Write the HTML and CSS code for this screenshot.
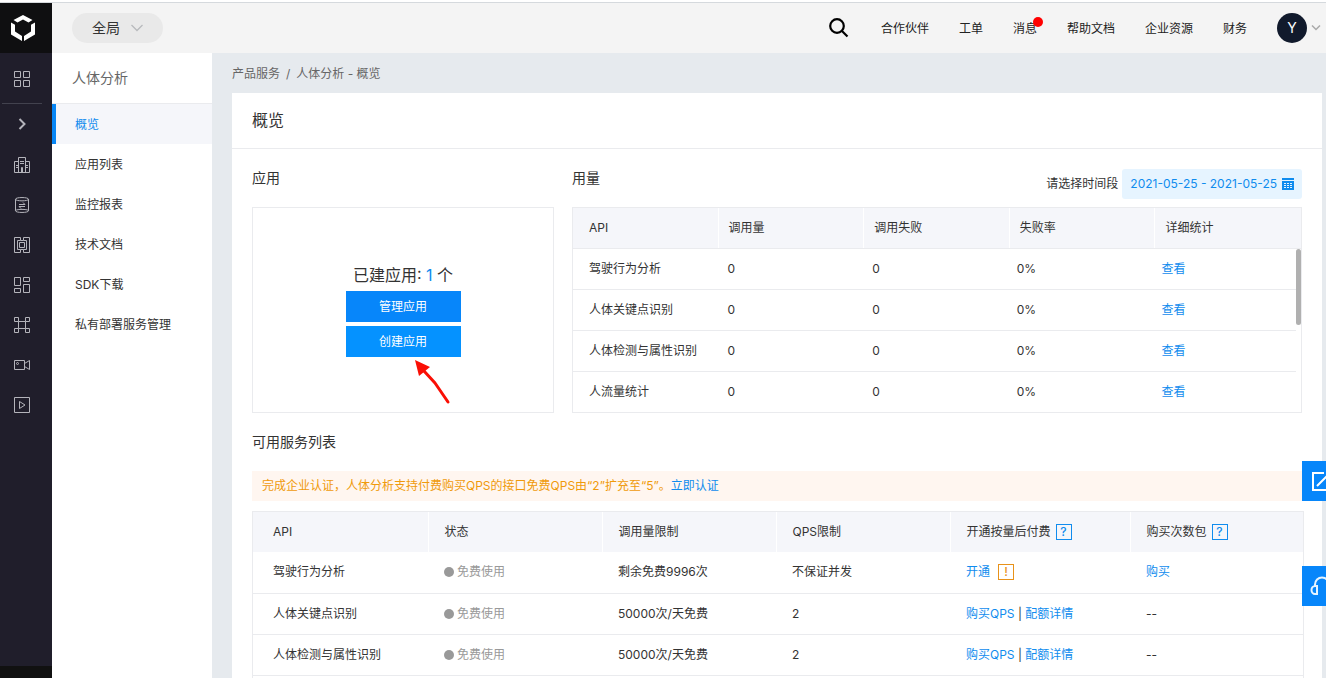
FILE: index.html
```html
<!DOCTYPE html>
<html lang="zh-CN">
<head>
<meta charset="utf-8">
<meta name="viewport" content="width=device-width, initial-scale=1">
<title>人体分析 - 概览</title>
<link rel="stylesheet" href="styles.css">
</head>
<body>
<div class="app">
  <nav class="rail" aria-label="产品导航">
    <a class="rail-logo" href="#" aria-label="首页">
      <svg width="24" height="28" viewBox="0 0 24 28" fill="#fff"><path d="M12 1 21.500 6 17.500 8.500 12 5.400 6.500 8.500 2.500 6z"/><path d="M0 8.500 4 10.800V17.500L11 22V27L0 20.600z"/><path d="M24 8.500 20 10.800V17.500L13 22V27L24 20.600z"/></svg>
    </a>
    <a class="rail-item rail-home" href="#" aria-label="总览">
      <svg class="icon" viewBox="0 0 16 16"><path d="M.5.500h6v6h-6zM9.500.500h6v6h-6zM.5 9.500h6v6h-6zM9.500 9.500h6v6h-6z"/></svg>
    </a>
    <a class="rail-item rail-expand" href="#" aria-label="展开">
      <svg class="icon icon-bold" viewBox="0 0 16 16"><path d="M5.500 3l5 5-5 5"/></svg>
    </a>
    <a class="rail-item" href="#" aria-label="企业">
      <svg class="icon" viewBox="0 0 16 16"><path d="M4.500 15.500V.500h7v15M4.500 4.500h-4v11h15v-11h-4M6 4.500h4M6 6.500h4M2 8.500h2.500M2 10.500h2.500M11.500 8.500H14M11.500 10.500H14M7.500 15.500v-5h1v5"/></svg>
    </a>
    <a class="rail-item" href="#" aria-label="数据">
      <svg class="icon" viewBox="0 0 16 16"><path d="M1.500 2.200C1.500 0 14.500 0 14.500 2.200S1.500 4.400 1.500 2.200v11.600c0 2.200 13 2.200 13 0V2.200M1.500 13.500c2-1.500 11-1.500 13 0M5 7.500h6L9 5.500M11 9.500H5l2 2"/></svg>
    </a>
    <a class="rail-item" href="#" aria-label="芯片">
      <svg class="icon" viewBox="0 0 16 16"><path d="M6.500 3.500v-3h-6v15h6v-3h-3v-9h3M9.500 3.500v-3h6v15h-6v-3h3v-9h-3M5.500 5.500h5v5h-5zM6.500 3.500h3M6.500 12.500h3"/></svg>
    </a>
    <a class="rail-item" href="#" aria-label="模块">
      <svg class="icon" viewBox="0 0 16 16"><path d="M.5.500h6v8h-6zM9.500.500h6v4h-6zM.5 11.500h6v4h-6zM9.500 7.500h6v8h-6z"/></svg>
    </a>
    <a class="rail-item" href="#" aria-label="图谱">
      <svg class="icon" viewBox="0 0 16 16"><path d="M.5.500h4v4h-4zM11.500.500h4v4h-4zM.5 11.500h4v4h-4zM11.500 11.500h4v4h-4zM4.500 4.500v7M11.500 4.500v7M4.500 4.500h7M4.500 11.500h7"/></svg>
    </a>
    <a class="rail-item" href="#" aria-label="视频">
      <svg class="icon" viewBox="0 0 16 16"><path d="M.5 3.500h10v9H.5zM10.500 6.500l5-3v9l-5-3"/><circle cx="3.500" cy="6.500" r="1"/></svg>
    </a>
    <a class="rail-item" href="#" aria-label="播放">
      <svg class="icon" viewBox="0 0 16 16"><path d="M.5.500h15v15H.5zM5.500 4.500 11 8l-5.500 3.500z"/></svg>
    </a>
  </nav>

  <div class="shell">
    <header class="topbar">
      <button class="scope" type="button">全局
        <svg width="12" height="8" viewBox="0 0 12 8" fill="none" stroke="#b8babd" stroke-width="1.300"><path d="M.5 1 6 6.500 11.500 1"/></svg>
      </button>
      <div class="top-links">
        <button class="search" type="button" aria-label="搜索">
          <svg width="20" height="20" viewBox="0 0 20 20" fill="none" stroke="#000" stroke-width="2.200"><circle cx="8" cy="8" r="6.800"/><path d="M13 13 18.500 18.500"/></svg>
        </button>
        <a href="#">合作伙伴</a>
        <a href="#">工单</a>
        <a class="message" href="#">消息<span class="dot"></span></a>
        <a href="#">帮助文档</a>
        <a href="#">企业资源</a>
        <a href="#">财务</a>
        <button class="account" type="button" aria-label="账户">
          <span class="avatar">Y</span>
          <svg width="10" height="6" viewBox="0 0 10 6" fill="none" stroke="#aaa" stroke-width="1.500"><path d="M1 .5 5 4.500 9 .5"/></svg>
        </button>
      </div>
    </header>

    <div class="body">
      <aside class="sidebar">
        <h2 class="sidebar-title">人体分析</h2>
        <a class="side-link active" href="#">概览</a>
        <a class="side-link" href="#">应用列表</a>
        <a class="side-link" href="#">监控报表</a>
        <a class="side-link" href="#">技术文档</a>
        <a class="side-link" href="#">SDK下载</a>
        <a class="side-link" href="#">私有部署服务管理</a>
      </aside>

      <main class="main">
        <nav class="crumbs" aria-label="面包屑"><a href="#">产品服务</a><span>/</span><span>人体分析 - 概览</span></nav>
        <div class="card">
          <h1 class="card-title">概览</h1>
          <div class="overview">
            <section class="apps">
              <div class="section-head"><h3>应用</h3></div>
              <div class="app-box">
                <p class="app-count">已建应用: <a href="#">1</a> 个</p>
                <button class="primary" type="button">管理应用</button>
                <button class="primary light" type="button">创建应用</button>
                <svg class="arrow" width="36" height="46" viewBox="0 0 36 46"><path d="M9 11 20 23 33 42" fill="none" stroke="#fa0f05" stroke-width="3" stroke-linecap="round" stroke-linejoin="round"/><path d="M0 0 15 7 4 16z" fill="#fa0f05"/></svg>
              </div>
            </section>
            <section class="usage">
              <div class="section-head">
                <h3>用量</h3>
                <div class="range">
                  <label for="range">请选择时间段</label>
                  <button id="range" class="range-button" type="button">2021-05-25 - 2021-05-25
                    <svg width="12" height="12" viewBox="0 0 12 12"><path fill="#108cee" d="M0 0h12v12H0z"/><path stroke="#e6f4ff" d="M0 2.500h12M2 5.500h8M2 7.500h8M2 9.500h8"/><path stroke="#108cee" d="M4.500 4v6M7.500 4v6"/></svg>
                  </button>
                </div>
              </div>
              <div class="usage-wrap">
                <table class="usage-table">
                  <thead><tr><th>API</th><th>调用量</th><th>调用失败</th><th>失败率</th><th>详细统计</th></tr></thead>
                  <tbody>
                    <tr><td>驾驶行为分析</td><td>0</td><td>0</td><td>0%</td><td><a href="#">查看</a></td></tr>
                    <tr><td>人体关键点识别</td><td>0</td><td>0</td><td>0%</td><td><a href="#">查看</a></td></tr>
                    <tr><td>人体检测与属性识别</td><td>0</td><td>0</td><td>0%</td><td><a href="#">查看</a></td></tr>
                    <tr><td>人流量统计</td><td>0</td><td>0</td><td>0%</td><td><a href="#">查看</a></td></tr>
                  </tbody>
                </table>
                <span class="thumb"></span>
              </div>
            </section>
          </div>

          <section class="services">
            <div class="section-head"><h3>可用服务列表</h3></div>
            <p class="notice">完成企业认证，人体分析支持付费购买QPS的接口免费QPS由“2”扩充至“5”。<a href="#">立即认证</a></p>
            <div class="service-wrap">
              <table class="service-table">
                <colgroup><col class="c-api"><col class="c-mid"><col class="c-mid"><col class="c-mid"><col class="c-pay"><col></colgroup>
                <thead><tr><th>API</th><th>状态</th><th>调用量限制</th><th>QPS限制</th><th>开通按量后付费<span class="badge">?</span></th><th>购买次数包<span class="badge">?</span></th></tr></thead>
                <tbody>
                  <tr><td>驾驶行为分析</td><td><span class="status">免费使用</span></td><td>剩余免费9996次</td><td>不保证并发</td><td><a href="#">开通</a><span class="badge warn">!</span></td><td><a href="#">购买</a></td></tr>
                  <tr><td>人体关键点识别</td><td><span class="status">免费使用</span></td><td>50000次/天免费</td><td>2</td><td><a href="#">购买QPS</a> | <a href="#">配额详情</a></td><td>--</td></tr>
                  <tr><td>人体检测与属性识别</td><td><span class="status">免费使用</span></td><td>50000次/天免费</td><td>2</td><td><a href="#">购买QPS</a> | <a href="#">配额详情</a></td><td>--</td></tr>
                </tbody>
              </table>
            </div>
          </section>
        </div>
      </main>
    </div>
  </div>
</div>

<div class="floats">
  <button class="float" type="button" aria-label="反馈">
    <svg width="20" height="20" viewBox="0 0 20 20" fill="none" stroke="#fff" stroke-width="2"><path d="M12 2H1v17h17V8M5 15 18 2"/></svg>
  </button>
  <button class="float" type="button" aria-label="客服">
    <svg width="24" height="22" viewBox="0 0 24 22" fill="none" stroke="#e6f4ff" stroke-width="2"><path d="M5 12V9.500a7 7 0 0 1 14 0V12M7 11v8H5a3.500 4 0 0 1 0-8zM17 11v8h2a3.500 4 0 0 0 0-8z"/></svg>
  </button>
</div>
</body>
</html>
```
FILE: styles.css
```css
* { box-sizing: border-box; }

body {
  margin: 0;
  background: #fff;
  color: #333;
  font: 12px/20px Inter, "Noto Sans CJK SC", sans-serif;
  overflow: hidden;
}

h1, h2, h3, p { margin: 0; font-weight: 400; }
a { color: #108cee; text-decoration: none; }
button { border: 0; padding: 0; background: none; font: inherit; color: inherit; cursor: pointer; }
svg { display: block; flex: none; }

.app {
  display: flex;
  height: 100vh;
  border-top: 2px solid #fff;
}

/* Icon rail */
.rail {
  flex: none;
  width: 52px;
  border-top: 1px solid #d5d9dd;
  border-bottom: 12px solid #111;
  background: #201e2b;
}
.rail-logo {
  display: flex;
  align-items: center;
  justify-content: center;
  height: 50px;
  padding-right: 6px;
  background: #0f0f11;
}
.rail-item {
  display: flex;
  align-items: center;
  justify-content: center;
  width: 44px;
  height: 40px;
}
.rail-home {
  width: 40px;
  height: 51px;
  margin-left: 2px;
  padding-top: 2px;
  border-bottom: 1px solid #42424e;
}
.rail-expand { height: 41px; padding-bottom: 2px; }
.icon { width: 16px; height: 16px; fill: none; stroke: #b4b4bb; }
.icon-bold { stroke-width: 2; }

.shell {
  display: flex;
  flex: 1;
  flex-direction: column;
  min-width: 0;
}

/* Header */
.topbar {
  display: flex;
  flex: none;
  align-items: center;
  justify-content: space-between;
  height: 51px;
  padding: 0 5px 0 20px;
  border-top: 1px solid #d5d9dd;
  background: #f4f4f4;
}
.scope {
  display: flex;
  align-items: center;
  gap: 11px;
  height: 30px;
  padding: 0 20px;
  border-radius: 15px;
  background: #e9e9e9;
  font-size: 14px;
}
.top-links { display: flex; align-items: center; gap: 30px; }
.top-links a { padding-top: 1px; color: #222; }
.search { padding-right: 2px; }
.message { position: relative; }
.dot {
  position: absolute;
  top: -1px;
  right: -6px;
  width: 10px;
  height: 10px;
  border-radius: 50%;
  background: #f00;
}
.account { display: flex; align-items: center; gap: 4px; }
.avatar {
  width: 30px;
  border-radius: 50%;
  background: #111a2c;
  color: #fff;
  font-size: 14px;
  line-height: 30px;
}

.body { display: flex; flex: 1; min-height: 0; background: #e6eaee; }

/* Section menu */
.sidebar { flex: none; width: 160px; background: #fff; }
.sidebar-title {
  padding: 0 20px;
  border-bottom: 1px solid #eaebee;
  color: #666;
  font-size: 14px;
  line-height: 50px;
}
.side-link {
  display: block;
  padding: 1px 0 0 19px;
  border-left: 4px solid transparent;
  color: #333;
  line-height: 39px;
}
.active { border-left-color: #0786f5; background: #f5f6fa; color: #108cee; }

.main {
  display: flex;
  flex: 1;
  flex-direction: column;
  min-width: 0;
  padding: 0 4px 0 20px;
  overflow: hidden;
}
.crumbs { display: flex; flex: none; gap: 6px; padding-top: 1px; color: #666; line-height: 39px; }
.crumbs a { color: #666; }
.card { display: flex; flex: 1 0 auto; flex-direction: column; background: #fff; }
.card-title {
  padding: 0 20px;
  border-bottom: 1px solid #eaebee;
  font-size: 16px;
  line-height: 55px;
}

.section-head {
  display: flex;
  flex: none;
  align-items: center;
  justify-content: space-between;
  height: 58px;
}
.section-head h3 { font-size: 14px; }

.overview { display: flex; gap: 18px; padding: 0 20px; }
.apps { flex: none; width: 302px; display: flex; flex-direction: column; }
.usage { flex: 1; min-width: 0; }

.app-box {
  position: relative;
  display: flex;
  flex: 1;
  flex-direction: column;
  align-items: center;
  justify-content: center;
  gap: 4px;
  border: 1px solid #eaebee;
}
.app-count { font-size: 16px; line-height: 24px; }
.primary {
  width: 115px;
  height: 31px;
  background: #0786fa;
  color: #fff;
}
.light { background: #0592ff; }
.arrow { position: absolute; top: 152px; left: 162px; }

.range { display: flex; align-items: center; align-self: flex-end; gap: 4px; padding-bottom: 8px; }
.range-button {
  display: flex;
  align-items: center;
  gap: 5px;
  height: 30px;
  padding: 0 8px;
  border-radius: 3px;
  background: #e6f4ff;
  color: #108cee;
}

table { width: 100%; border-collapse: collapse; }
th, td { font-weight: 400; text-align: left; }

.usage-wrap { position: relative; border: 1px solid #eaebee; border-bottom: 0; }
.usage-table, .usage-table thead, .usage-table tbody { display: block; }
.usage-table tr {
  display: grid;
  grid-template-columns: repeat(5, minmax(0, 1fr));
  line-height: 40px;
  border-bottom: 1px solid #eaebee;
}
.usage-table tbody tr { margin-right: 5px; }
.usage-table tbody tr:last-child { margin-right: 0; padding-right: 5px; }
.usage-table th, .usage-table td { padding: 0 10px; }
.usage-table th:first-child, .usage-table td:first-child { padding: 0 0 0 16px; }
.usage-table thead { background: #f5f6fa; }
.usage-table th:not(:last-child) { border-right: 1px solid #fff; }
.thumb {
  position: absolute;
  top: 41px;
  right: 0;
  width: 5px;
  height: 76px;
  border-radius: 3px;
  background: #b0b0b0;
}

/* Service list */
.services { display: flex; flex: 1; flex-direction: column; padding: 0 18px 0 20px; }
.notice {
  margin-bottom: 10px;
  padding: 0 10px;
  background: #fff6f0;
  color: #f09a0b;
  line-height: 30px;
}
.service-wrap { flex: 1; border: 1px solid #eaebee; border-bottom: 0; }
.service-table { table-layout: fixed; }
.c-api { width: 175px; }
.c-mid { width: 174px; }
.c-pay { width: 180px; }
.service-table th, .service-table td { height: 41px; padding: 0 16px; border-bottom: 1px solid #eaebee; }
.service-table th { height: 40px; border-bottom: 0; background: #f5f6fa; }
.service-table th:first-child, .service-table td:first-child { padding-left: 20px; }
.service-table th:not(:last-child) { border-right: 1px solid #fff; }
.badge {
  display: inline-block;
  width: 16px;
  margin-left: 5px;
  border: 1px solid #108cee;
  color: #108cee;
  font-weight: 500;
  line-height: 14px;
  text-align: center;
}
.warn { margin-left: 8px; border-color: #e8921a; color: #e8921a; }
.status { display: flex; align-items: center; gap: 3px; color: #999; }
.status::before {
  width: 10px;
  height: 10px;
  border-radius: 50%;
  background: #999;
  content: "";
}

/* Floating shortcuts, partly tucked behind the right edge */
.floats {
  position: fixed;
  top: 461px;
  right: -16px;
  display: grid;
  gap: 65px;
}
.float {
  display: flex;
  align-items: center;
  justify-content: center;
  width: 40px;
  height: 40px;
  background: #0786fa;
}
```
